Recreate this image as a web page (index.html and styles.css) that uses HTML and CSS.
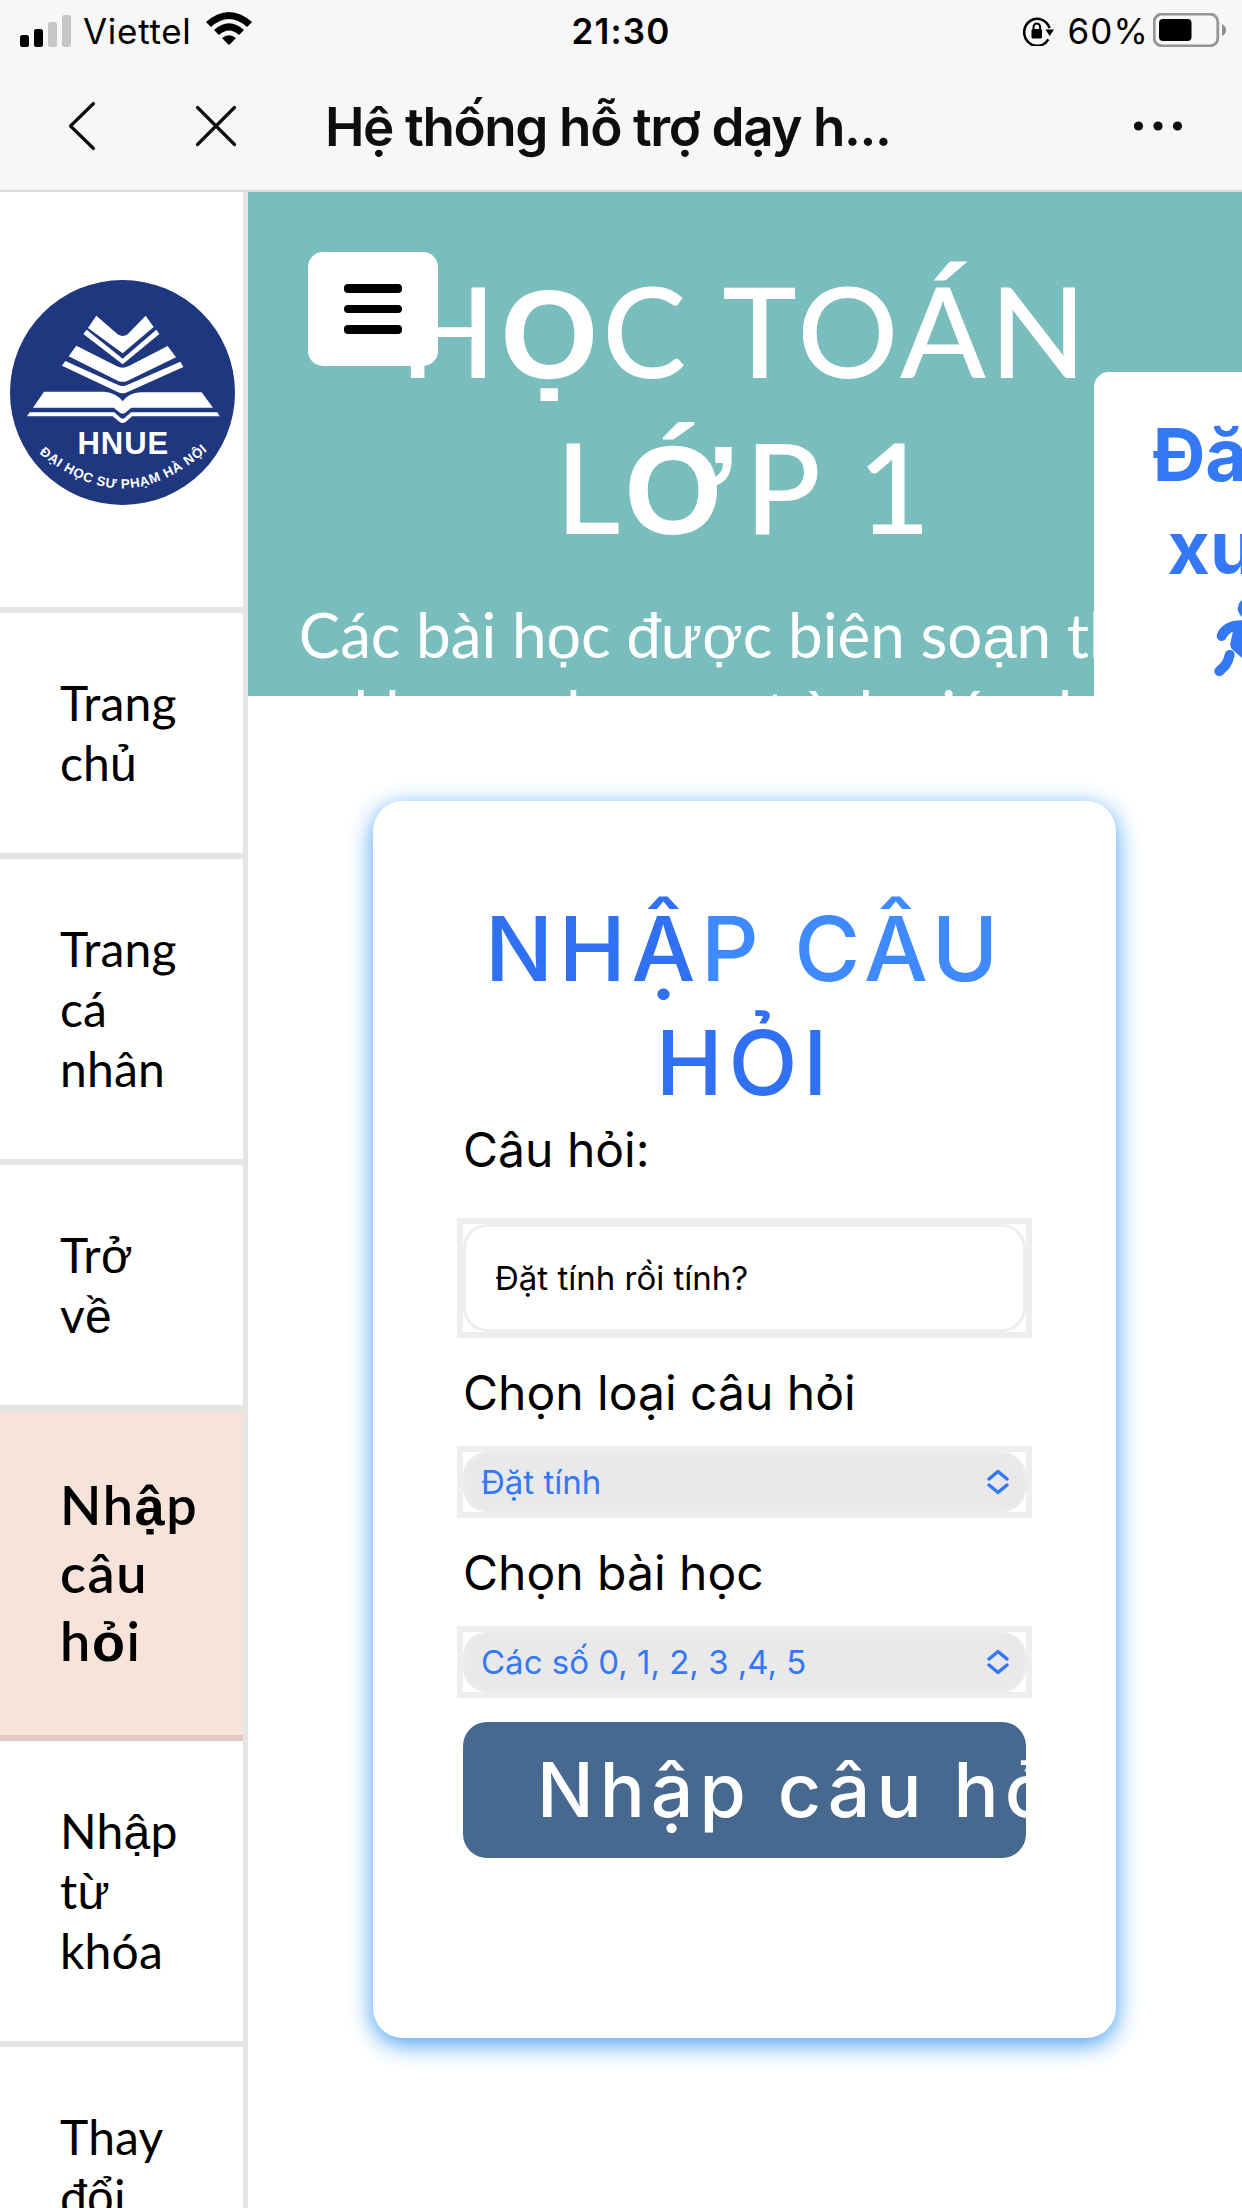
FILE: index.html
```html
<!DOCTYPE html>
<html lang="vi">
<head>
<meta charset="utf-8">
<title>Hệ thống hỗ trợ dạy học</title>
<link rel="stylesheet" href="styles.css">
</head>
<body>
<header class="browser">
  <div class="status">
    <div class="status-left">
      <svg class="signal" width="51" height="32" viewBox="0 0 51 32"><rect x="0" y="20" width="9" height="12" rx="2.5"/><rect x="14" y="14" width="9" height="18" rx="2.5"/><rect class="off" x="28" y="7" width="9" height="25" rx="2.5"/><rect class="off" x="42" y="0" width="9" height="32" rx="2.5"/></svg>
      <span class="carrier">Viettel</span>
      <svg class="wifi" width="46" height="33" viewBox="0 0 46 33"><path d="M0 10Q23-10 46 10L41 15Q23-1 5 15Z"/><path d="M8 18Q23 4.500 38 18L33 23Q23 14 13 23Z"/><path d="M16 26Q23 20.500 30 26L24 32.200Q23 33 22 32.200Z"/></svg>
    </div>
    <span class="clock">21:30</span>
    <div class="status-right">
      <svg class="lock" width="32" height="30" viewBox="0 0 32 30"><path class="line" d="M25.300 23.300A13 13.500 0 1 1 26.500 12"/><path d="M22.500 13.500h8.500l-4.300 6.500z"/><rect x="8.500" y="13" width="10.500" height="9.500" rx="1.500"/><path class="thin" d="M10.500 14v-3a3.300 3.500 0 0 1 6.600 0v3"/></svg>
      <span class="percent">60%</span>
      <svg class="battery" width="74" height="34" viewBox="0 0 74 34"><rect class="case" x="1.200" y="1.200" width="63.600" height="31.600" rx="7.500"/><rect x="6" y="6" width="32.500" height="22" rx="4"/><path class="nub" d="M69 11q4 2 4 6t-4 6z"/></svg>
    </div>
  </div>
  <nav class="navbar">
    <svg class="back" width="30" height="50" viewBox="0 0 30 50"><path d="M26.500 2.500L3.500 25l23 22.500"/></svg>
    <svg class="close" width="42" height="42" viewBox="0 0 42 42"><path d="M2.500 2.500l37 37M39.500 2.500l-37 37"/></svg>
    <span class="page-name">Hệ thống hỗ trợ dạy h...</span>
    <svg class="more" width="50" height="12" viewBox="0 0 50 12"><circle cx="5.500" cy="6" r="4.600"/><circle cx="25" cy="6" r="4.600"/><circle cx="44.500" cy="6" r="4.600"/></svg>
  </nav>
</header>
<div class="page">
  <aside class="sidebar">
    <div class="brand">
      <svg width="225" height="225" viewBox="29 90 675 675">
        <circle cx="366.500" cy="427.500" r="337.500" fill="#1f377f"/>
        <g fill="#fff">
          <path d="M288 197L352 253Q367 263 382 253L436 197L460 231L367 310L263 234Z"/>
          <path d="M259 239L367 326L468 239L477 252L367 343L249 252Z"/>
          <path d="M228 287L350 349Q367 357 384 349L502 288L527 322L382 392Q367 399 352 392L205 319Z"/>
          <path d="M195 333L352 404Q367 412 382 404L540 335L549 351L382 426Q367 434 352 426L185 347Z"/>
          <path d="M131 425H312Q348 428 367 454Q386 428 420 427H604L638 473H393L375 488Q367 493 359 488L340 473H98Z"/>
          <path d="M88 487H342L361 504Q367 508 373 504L392 487H651L658 499H395L375 517Q367 521 359 517L337 499H80Z"/>
        </g>
        <text class="logo-name" x="369" y="612">HNUE</text>
        <path id="rim" d="M109 603Q240 715 367 715Q494 715 630 594" fill="none"/>
        <text class="logo-rim"><textPath href="#rim" startOffset="50%">ĐẠI HỌC SƯ PHẠM HÀ NỘI</textPath></text>
      </svg>
    </div>
    <a class="item">Trang<br>ch<span class="alt">ủ</span></a>
    <a class="item">Trang<br>cá<br>nhân</a>
    <a class="item">Tr<span class="alt">ở</span><br>v<span class="alt">ề</span></a>
    <a class="item active">Nh<span class="alt">ậ</span>p<br>câu<br>h<span class="alt">ỏ</span>i</a>
    <a class="item">Nh<span class="alt">ậ</span>p<br>t<span class="alt">ừ</span><br>khóa</a>
    <a class="item">Thay<br>đ<span class="alt">ổ</span>i</a>
  </aside>
  <main class="main">
    <section class="hero">
      <h1 class="hero-title">H<span class="alt">Ọ</span>C TOÁN<br>L<span class="alt wide">Ớ</span>P 1</h1>
      <p class="hero-text">Các bài h<span class="alt">ọ</span>c đ<span class="alt">ượ</span>c biên so<span class="alt">ạ</span>n theo<br>khung ch<span class="alt">ươ</span>ng trình giáo d<span class="alt">ụ</span>c</p>
      <button class="menu"><i></i><i></i><i></i></button>
      <div class="logout">Đăng<br>xuất
        <svg width="72" height="93" viewBox="1407 1209 216 279"><circle cx="1520" cy="1252" r="30"/><path class="limb" d="M1442 1335Q1455 1302 1506 1303L1545 1310L1570 1345H1605"/><path d="M1477 1316L1545 1305L1535 1370L1560 1410L1530 1425L1473 1375Q1465 1365 1469 1352Z"/><path class="limb" d="M1466 1392Q1462 1410 1453 1423L1435 1441M1520 1370L1555 1405L1545 1460"/></svg>
      </div>
    </section>
    <form class="card">
      <h2 class="card-title">NHẬ<span class="light">P CÂU</span><br>HỎI</h2>
      <label class="label">Câu hỏi:</label>
      <div class="frame first"><div class="field">Đặt tính rồi tính?</div></div>
      <label class="label">Chọn loại câu hỏi</label>
      <div class="frame"><div class="select"><span>Đặt tính</span><svg width="22" height="26" viewBox="0 0 22 26"><path d="M2 10l9-7.500 9 7.500M2 16l9 7.500 9-7.500"/></svg></div></div>
      <label class="label">Chọn bài học</label>
      <div class="frame last"><div class="select"><span>Các số 0, 1, 2, 3 ,4, 5</span><svg width="22" height="26" viewBox="0 0 22 26"><path d="M2 10l9-7.500 9 7.500M2 16l9 7.500 9-7.500"/></svg></div></div>
      <button class="submit" type="button">Nhập câu hỏi</button>
    </form>
  </main>
</div>
</body>
</html>
```
FILE: styles.css
```css
* { box-sizing: border-box; }
body { margin: 0; width: 1242px; height: 2208px; overflow: hidden; background: #fff; color: #000; font-family: Inter, "Liberation Sans", sans-serif; }
svg { display: block; flex: none; }
button { border: 0; margin: 0; font-family: inherit; }

.browser { height: 192px; background: #f7f7f7; border-bottom: 2px solid #dcdcdc; }
.status { height: 62px; display: grid; grid-template-columns: 1fr auto 1fr; align-items: center; font-size: 35px; line-height: 42px; }
.status-left, .status-right { display: flex; align-items: center; }
.status-left { padding-left: 20px; }
.status-right { justify-content: flex-end; padding-right: 15px; }
.signal { margin-right: 12px; }
.off { fill: #c6c6c6; }
.carrier { letter-spacing: .7px; }
.wifi { margin: -5px 0 0 14px; }
.clock { font-weight: 600; letter-spacing: 1.2px; }
.percent { letter-spacing: 1.1px; }
.lock { margin-right: 13px; }
.lock .line, .lock .thin { fill: none; stroke: #000; stroke-width: 2.6; }
.lock .thin { stroke-width: 2; }
.battery { margin: -3px 0 0 4px; }
.battery .case { fill: none; stroke: #959595; stroke-width: 2.8; }
.battery .nub { fill: #8e8e8e; }
.navbar { height: 128px; display: flex; align-items: center; color: #0e0e0e; }
.back, .close { fill: none; stroke: #0e0e0e; stroke-width: 3.2; stroke-linecap: round; stroke-linejoin: round; }
.back { margin-left: 67px; }
.close { margin-left: 98px; }
.page-name { margin: 2px 0 0 88px; font-size: 53px; font-weight: 600; letter-spacing: -1.4px; line-height: 64px; }
.more { margin-left: auto; margin-right: 59px; fill: #0e0e0e; }

.page { display: flex; height: 2016px; overflow: hidden; }
.sidebar { flex: none; width: 248px; border-right: 5px solid #e5e5e5; font-family: Lato, "Liberation Sans", sans-serif; }
.brand { height: 421px; padding: 88px 0 0 9.500px; border-bottom: 6px solid #e5e5e5; }
.logo-name { font: 700 93px "Liberation Sans", Arial, sans-serif; text-anchor: middle; fill: #fff; letter-spacing: 3px; }
.logo-rim { font: 700 40px "Liberation Sans", Arial, sans-serif; text-anchor: middle; fill: #fff; letter-spacing: 2px; }
.item { display: block; padding: 60px 0 60px 60px; border-bottom: 6px solid #e5e5e5; font-size: 48px; line-height: 60px; letter-spacing: .2px; }
.active { background: #f6e4db; border-bottom-color: #dfcbc3; font-size: 54px; font-weight: 600; line-height: 68px; letter-spacing: 1.6px; }
.alt { font-family: "Liberation Sans", Arial, sans-serif; line-height: 1; }
.active .alt { font-weight: 700; }

.main { flex: 1; min-width: 0; }
.hero { position: relative; height: 504px; padding-top: 60px; overflow: hidden; background: #79bdbd; color: #fff; text-align: center; font-family: Lato, "Liberation Sans", sans-serif; }
.hero-title { margin: 0; font-size: 126px; font-weight: 500; line-height: 156px; letter-spacing: 4px; }
.hero-title .alt { font-weight: 700; }
.hero-title .wide { letter-spacing: 13px; }
.hero-text { margin: 31px 0 0; font-size: 62px; line-height: 78px; white-space: nowrap; letter-spacing: -.1px; }
.menu { position: absolute; left: 60px; top: 60px; width: 130px; height: 114px; padding: 0; border-radius: 15px; background: #fff; display: flex; flex-direction: column; align-items: center; justify-content: center; gap: 12px; }
.menu i { width: 58px; height: 8.500px; border-radius: 4px; background: #000; }
.logout { position: absolute; left: 846px; top: 180px; width: 304px; height: 360px; padding-top: 36px; border-radius: 15px; background: #fff; color: #3478f6; font: 700 73px/93px Inter, "Liberation Sans", sans-serif; }
.logout svg { margin: 0 auto; fill: #3478f6; }
.limb { fill: none; stroke: #3478f6; stroke-width: 30; stroke-linecap: round; stroke-linejoin: round; }

.card { width: 743px; height: 1237px; margin: 105px 0 0 125px; padding: 91px 90px 0; border-radius: 30px; background: #fff; box-shadow: 0 6px 24px #419df1; }
.card-title { margin: 0; color: #3070f2; font-size: 90px; font-weight: 500; line-height: 114px; letter-spacing: 5.7px; text-align: center; white-space: nowrap; }
.light { color: #408aff; }
.label { display: block; font-size: 48px; line-height: 60px; white-space: nowrap; }
.frame { margin: 23px -6px 25px; border: 6px solid #eee; }
.first { margin-top: 38px; }
.last { margin-bottom: 24px; }
.field { height: 108px; padding: 0 29px; border: 3px solid #eee; border-radius: 24px; font-size: 33px; line-height: 103px; }
.select { height: 60px; padding: 0 14px 0 15px; border: 3px solid #ebebeb; border-radius: 24px; background: #e9e9e9; color: #3478f6; font-size: 33px; line-height: 54px; display: flex; align-items: center; justify-content: space-between; }
.select svg { fill: none; stroke: #3478f6; stroke-width: 3.5; stroke-linecap: round; stroke-linejoin: round; }
.submit { display: block; width: 100%; height: 136px; padding: 0 0 0 74px; border-radius: 24px; background: #476990; color: #fff; font-size: 75px; font-weight: 500; line-height: 136px; letter-spacing: 6px; text-align: left; white-space: nowrap; overflow: hidden; }
```
